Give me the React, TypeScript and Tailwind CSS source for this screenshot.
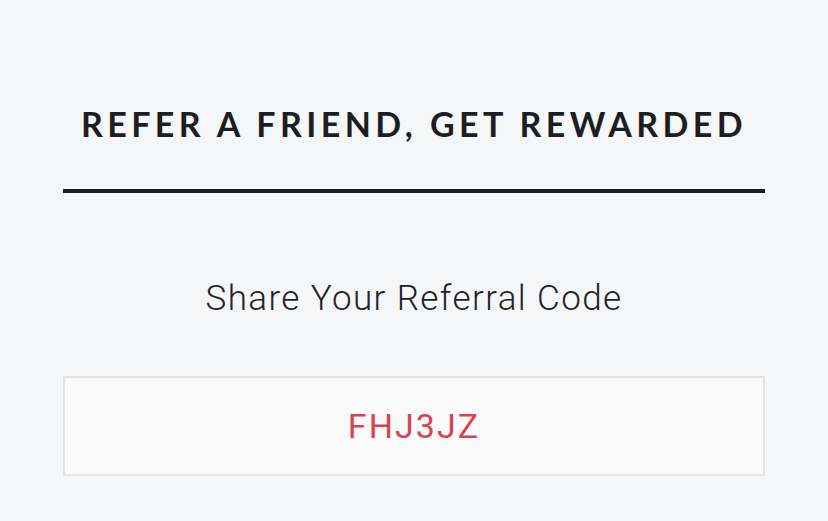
import React from 'react';

export default function App() {
  return (
    <div className="min-h-[521px] bg-[#f5f6f8] flex justify-center">
      <div className="w-[702px] flex flex-col items-center pt-[100px]">
        {/* Title */}
        <h1
          className="text-[34px] leading-[48px] font-bold tracking-[0.13em] text-[#1d1e21] whitespace-nowrap"
          style={{ fontFamily: 'Lato, "Noto Sans", sans-serif' }}
        >
          REFER A FRIEND, GET REWARDED
        </h1>
        <div className="w-full h-[4px] bg-[#1d1e21] mt-[41px]" />

        {/* Referral code */}
        <p
          className="mt-[84px] text-[35px] leading-[44px] font-light tracking-[0.04em] text-[#222326]"
          style={{ fontFamily: 'Roboto, sans-serif' }}
        >
          Share Your Referral Code
        </p>
        <div className="mt-[55px] w-full h-[100px] border-2 border-[#e3e3e5] bg-[#fafafa] flex items-center justify-center">
          <span
            className="text-[34px] text-[#d9444f] tracking-[0.06em]"
            style={{ fontFamily: 'Roboto, sans-serif' }}
          >
            FHJ3JZ
          </span>
        </div>
      </div>
    </div>
  );
}
